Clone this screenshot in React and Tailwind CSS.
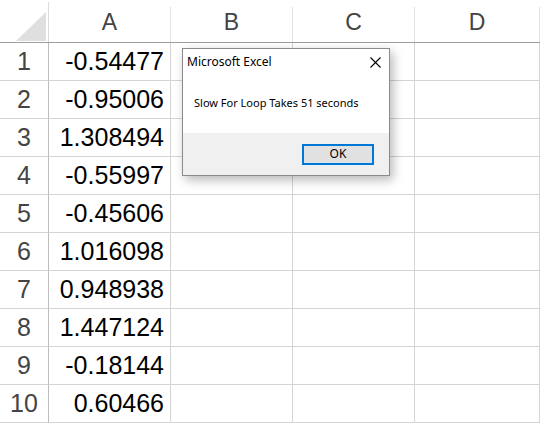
import React from 'react'

const values = [
  '-0.54477',
  '-0.95006',
  '1.308494',
  '-0.55997',
  '-0.45606',
  '1.016098',
  '0.948938',
  '1.447124',
  '-0.18144',
  '0.60466',
]

const cols = ['A', 'B', 'C', 'D']
const font = { fontFamily: '"Liberation Sans", Arial, sans-serif' }

function Dialog() {
  return (
    <div
      className="absolute left-[182px] top-[48px] w-[208px] h-[128px] border border-[#8a8a8a] bg-white flex flex-col shadow-[3px_4px_10px_rgba(0,0,0,0.28)]"
      style={{ fontFamily: '"Segoe UI", "Noto Sans", sans-serif' }}
    >
      <div className="flex items-center justify-between h-[26px] pl-[4px] pr-[8px] text-[12px] text-black">
        <span>Microsoft Excel</span>
        <svg width="11" height="11" viewBox="0 0 11 11" className="text-black">
          <path d="M0.5 0.5 L10.5 10.5 M10.5 0.5 L0.5 10.5" stroke="currentColor" strokeWidth="1.1" />
        </svg>
      </div>
      <div className="flex-1 pl-[11px] pt-[20px] text-[11px] text-black">Slow For Loop Takes 51 seconds</div>
      <div className="h-[42px] bg-[#f0f0f0] flex items-center justify-end pr-[15px]">
        <div className="w-[72px] h-[21px] border-2 border-[#0078d7] bg-[#e1e1e1] flex items-center justify-center text-[12px] text-black">
          OK
        </div>
      </div>
    </div>
  )
}

export default function App() {
  return (
    <div className="relative w-[540px] h-[425px] bg-white overflow-hidden" style={font}>
      <div className="grid grid-cols-[49px_122px_122px_122px_125px] grid-rows-[43px_repeat(10,38px)]">
        <div className="relative border-b border-b-[#9e9e9e] pt-[2px]">
          <div className="h-full border-r border-r-[#dcdcdc]" />
          <div className="absolute left-[16px] top-[12px] w-[30px] h-[29px] bg-[#dfdfdf] [clip-path:polygon(100%_0,100%_100%,0_100%)]" />
        </div>
        {cols.map((c) => (
          <div key={c} className="border-b border-b-[#9e9e9e] pt-[7px]">
            <div className="h-full flex items-end justify-center pb-[8px] border-r border-r-[#e2e2e2] text-[23px] text-[#444444] leading-none">
              {c}
            </div>
          </div>
        ))}
        {values.map((v, i) => (
          <React.Fragment key={i}>
            <div className="flex items-center justify-center border-r border-r-[#bdbdbd] border-b border-b-[#d4d4d4] text-[25px] text-[#444444]">
              {i + 1}
            </div>
            <div className="flex items-center justify-end pr-[6px] border-r border-b border-[#d4d4d4] text-[25px] text-black">
              {v}
            </div>
            <div className="border-r border-b border-[#d4d4d4]" />
            <div className="border-r border-b border-[#d4d4d4]" />
            <div className="border-r border-b border-[#d4d4d4]" />
          </React.Fragment>
        ))}
      </div>
      <Dialog />
    </div>
  )
}
